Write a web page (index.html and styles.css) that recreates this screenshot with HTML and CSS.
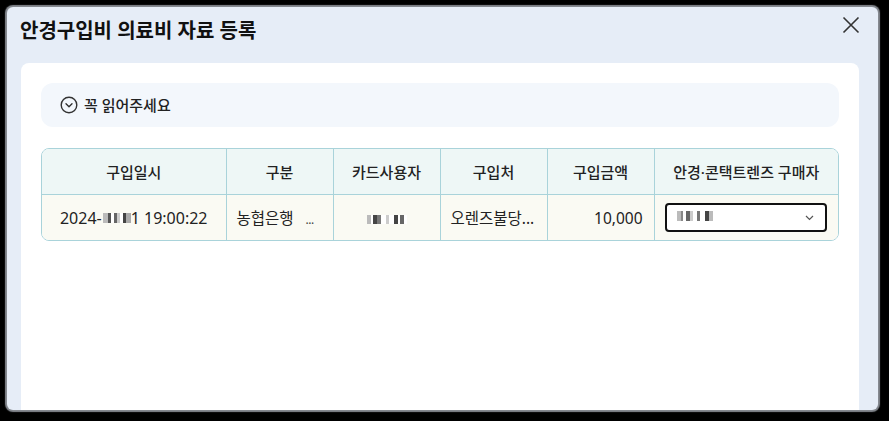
FILE: index.html
```html
<!DOCTYPE html>
<html lang="ko">
<head>
<meta charset="utf-8">
<title>안경구입비 의료비 자료 등록</title>
<link rel="stylesheet" href="styles.css">
</head>
<body>
<div class="dialog">
  <div class="dialog-header">
    <h1 class="dialog-title">안경구입비 의료비 자료 등록</h1>
    <button class="close-btn" aria-label="닫기">
      <svg width="18" height="18" viewBox="0 0 18 18"><path d="M1.5 1.5 L16.5 16.5 M16.5 1.5 L1.5 16.5" stroke="#333" stroke-width="1.6" fill="none"/></svg>
    </button>
  </div>
  <div class="panel">
    <div class="notice">
      <svg class="notice-icon" width="18" height="18" viewBox="0 0 18 18"><circle cx="9" cy="9" r="7.8" fill="none" stroke="#333" stroke-width="1.4"/><path d="M6 7.8 L9 10.8 L12 7.8" fill="none" stroke="#333" stroke-width="1.4" stroke-linecap="round" stroke-linejoin="round"/></svg>
      <span class="notice-text">꼭 읽어주세요</span>
    </div>
    <div class="table-wrap">
      <table class="grid">
        <colgroup>
          <col class="c-date"><col class="c-mid"><col class="c-mid"><col class="c-mid"><col class="c-mid"><col class="c-date">
        </colgroup>
        <thead>
          <tr>
            <th>구입일시</th><th>구분</th><th>카드사용자</th><th>구입처</th><th>구입금액</th><th>안경·콘택트렌즈 구매자</th>
          </tr>
        </thead>
        <tbody>
          <tr>
            <td class="center date">2024-<span class="blur blur-date"></span>1 19:00:22</td>
            <td class="left">농협은행<span class="gap"></span><span class="dots">...</span></td>
            <td class="center"><span class="blur blur-name"></span></td>
            <td class="left">오렌즈불당...</td>
            <td class="right">10,000</td>
            <td class="sel-cell">
              <div class="select">
                <span class="blur blur-sel"></span>
                <svg class="chev" width="9" height="6" viewBox="0 0 9 6"><path d="M1 1 L4.5 4.5 L8 1" fill="none" stroke="#555" stroke-width="1.2"/></svg>
              </div>
            </td>
          </tr>
        </tbody>
      </table>
    </div>
  </div>
</div>
</body>
</html>
```
FILE: styles.css
```css
html, body {
  margin: 0;
  padding: 0;
  background: #000;
  height: 421px;
  overflow: hidden;
}
body {
  font-family: "Noto Sans", "Noto Sans CJK KR", sans-serif;
  color: #222;
}
.dialog {
  margin: 7px 11px 0 7px;
  width: 871px;
  height: 403px;
  background: #e6edf7;
  border-radius: 6px;
  box-shadow: 0 0 1px 2px rgba(190, 195, 205, 0.7);
  overflow: hidden;
  padding: 0 19px 0 14px;
  box-sizing: border-box;
}
.dialog-header {
  height: 56px;
  display: flex;
  justify-content: space-between;
  align-items: flex-start;
}
.dialog-title {
  margin: 10px 0 0 -1px;
  font-size: 20px;
  line-height: 28px;
  font-weight: 700;
  color: #111;
}
.close-btn {
  margin: 9px -1px 0 0;
  padding: 0;
  border: 0;
  background: transparent;
  width: 18px;
  height: 18px;
  display: flex;
}
.panel {
  background: #fff;
  border-radius: 8px 8px 0 0;
  height: 400px;
  padding: 20px 20px 0 20px;
}
.notice {
  height: 44px;
  background: #f3f7fc;
  border-radius: 12px;
  display: flex;
  align-items: center;
  padding-left: 19px;
  gap: 6px;
}
.notice-icon { display: block; }
.notice-text {
  font-size: 15px;
  font-weight: 500;
  color: #222;
  line-height: 20px;
}
.table-wrap {
  margin-top: 21px;
  border: 1px solid #a9d3da;
  border-radius: 8px;
  overflow: hidden;
}
.grid {
  width: 100%;
  border-collapse: collapse;
  table-layout: fixed;
}
.c-date { width: 184px; }
.c-mid { width: 107px; }
.grid th {
  height: 45px;
  background: #eef7f6;
  font-size: 15px;
  font-weight: 500;
  color: #222;
  border-bottom: 1px solid #a9d3da;
  border-left: 1px solid #a9d3da;
  padding: 0;
}
.grid td {
  height: 45px;
  background: #fafaf3;
  font-size: 15.5px;
  color: #222;
  border-left: 1px solid #a9d3da;
  padding: 0 10px;
  white-space: nowrap;
}
.grid td.date { font-size: 16px; }
.grid th:first-child, .grid td:first-child { border-left: 0; }
.center { text-align: center; }
.left { text-align: left; }
.right { text-align: right; padding-right: 11px !important; }
.gap { display: inline-block; width: 12px; }
.dots { font-size: 12px; color: #444; letter-spacing: -0.5px; }
.blur { display: inline-block; vertical-align: middle; }
.blur-date {
  width: 28px;
  height: 10px;
  margin: 0 0 2px 1px;
  background: linear-gradient(to right, #bbb 0 5px, #555 5px 8px, #fff 8px 11px, #666 11px 14px, #ccc 14px 17px, #fff 17px 20px, #444 20px 23px, #aaa 23px 28px);
}
.blur-name {
  width: 40px;
  height: 9px;
  background: linear-gradient(to right, #bbb 0 4px, #fff 4px 6px, #444 6px 10px, #777 10px 14px, #fff 14px 19px, #ccc 19px 22px, #fff 22px 27px, #444 27px 31px, #fff 31px 33px, #666 33px 37px, #fff 37px 40px);
}
.sel-cell { padding: 0 11px 0 10px !important; }
.select {
  height: 29px;
  border: 2px solid #111;
  border-radius: 4px;
  background: #fff;
  box-sizing: border-box;
  display: flex;
  align-items: center;
  justify-content: space-between;
  padding: 0 11px 0 10px;
}
.blur-sel {
  width: 41px;
  height: 10px;
  margin-top: -4px;
  background: linear-gradient(to right, #bbb 0 4px, #888 4px 6px, #fff 6px 9px, #666 9px 13px, #ccc 13px 16px, #fff 16px 20px, #777 20px 23px, #fff 23px 28px, #444 28px 32px, #bbb 32px 36px, #fff 36px 41px);
}
.chev { display: block; }
```
